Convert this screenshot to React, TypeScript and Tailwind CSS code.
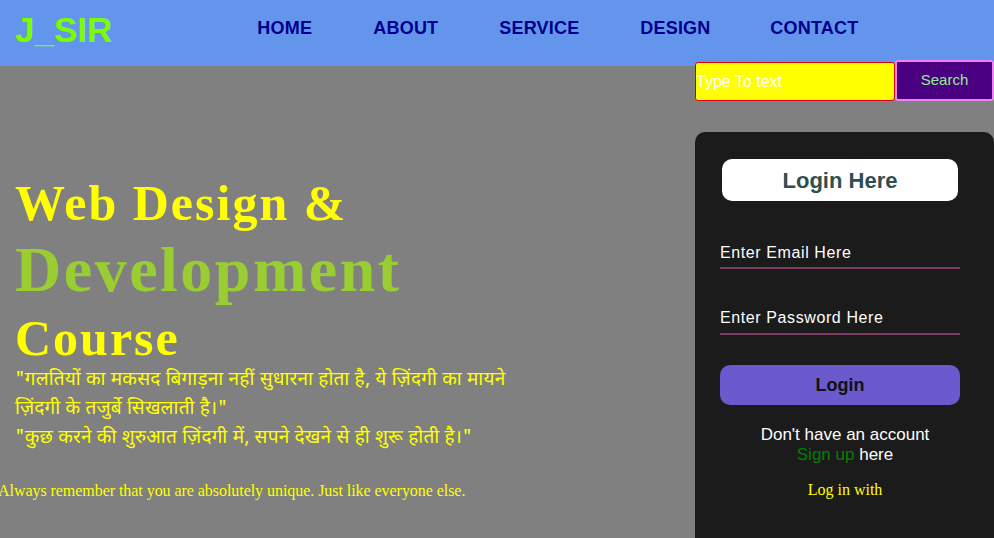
export default function App() {
  return (
    <div className="h-[538px] w-[994px] overflow-hidden bg-[#808080] font-['Liberation_Sans',Arial,sans-serif]">
      <nav className="flex h-[66px] items-start bg-[#6495ed]">
        <div className="pl-[15px] pt-[4px] text-[35px] font-bold text-[#7cfc00]">J_SIR</div>
        <ul className="ml-[145px] flex pt-[15px] text-[18px] font-bold tracking-[0.2px] text-[#00008b]">
          <li className="w-[116px]">HOME</li>
          <li className="w-[126px]">ABOUT</li>
          <li className="w-[141px]">SERVICE</li>
          <li className="w-[130px]">DESIGN</li>
          <li>CONTACT</li>
        </ul>
      </nav>

      <div className="flex">
        <div className="flex-1 pt-[107px]">
          <h1 className="pl-[15px] font-['Liberation_Serif',serif] font-bold text-[#ffff00]">
            <div className="text-[50px] leading-[60px] tracking-[2px]">Web Design &amp;</div>
            <div className="text-[64px] leading-[74px] tracking-[2.5px] text-[#9acd32]">Development</div>
            <div className="text-[50px] leading-[62px] tracking-[2px]">Course</div>
          </h1>
          <div className="-mt-[3px] pl-[15px] font-['Noto_Sans_Devanagari','Noto_Sans',sans-serif] text-[19px] leading-[29px] tracking-[0.2px] text-[#ffff00]">
            <p className="w-[510px]">
              "गलतियों का मकसद बिगाड़ना नहीं सुधारना होता है, ये ज़िंदगी का मायने ज़िंदगी के तजुर्बे सिखलाती है।"
            </p>
            <p>"कुछ करने की शुरुआत ज़िंदगी में, सपने देखने से ही शुरू होती है।"</p>
          </div>
          <p className="-ml-[2px] mt-[26px] font-['Liberation_Serif',serif] text-[16px] tracking-[-0.05px] text-[#ffff00]">
            Always remember that you are absolutely unique. Just like everyone else.
          </p>
        </div>

        <div className="flex w-[299px] flex-col">
          <div className="-mt-[6px] flex h-[40px]">
            <div className="mt-[2px] flex h-[39px] w-[200px] items-center rounded-[3px] border border-[#e00000] bg-[#ffff00] text-[16px] text-white">
              Type To text
            </div>
            <button className="flex h-[41px] w-[99px] items-center justify-center rounded-[3px] border-2 border-[#ee82ee] bg-[#4b0082] text-[15px] text-[#90ee90]">
              Search
            </button>
          </div>

          <div className="mt-[32px] h-[420px] rounded-[10px] bg-[#1b1b1b] px-[25px] pt-[27px]">
            <div className="ml-[2px] flex h-[42px] w-[236px] items-center justify-center rounded-[10px] bg-white text-[22px] font-bold text-[#2f4f4f]">
              Login Here
            </div>
            <div className="mt-[42px] w-[240px] border-b-2 border-[#7d3b63] pb-[4px] text-[16px] leading-[20px] tracking-[0.6px] text-white">
              Enter Email Here
            </div>
            <div className="mt-[39px] w-[240px] border-b-2 border-[#7d3b63] pb-[5px] text-[16px] leading-[20px] tracking-[0.6px] text-white">
              Enter Password Here
            </div>
            <button className="mt-[30px] flex h-[40px] w-[240px] items-center justify-center rounded-[10px] bg-[#6a5acd] text-[18px] font-bold text-[#111]">
              Login
            </button>
            <div className="mt-[20px] w-[250px] text-center text-[17px] leading-[20px] text-white">
              Don't have an account
              <br />
              <span className="text-[#008000]">Sign up</span> here
            </div>
            <div className="mt-[16px] w-[250px] text-center font-['Liberation_Serif',serif] text-[16px] leading-[18px] text-[#ffff00]">
              Log in with
            </div>
          </div>
        </div>
      </div>
    </div>
  );
}
